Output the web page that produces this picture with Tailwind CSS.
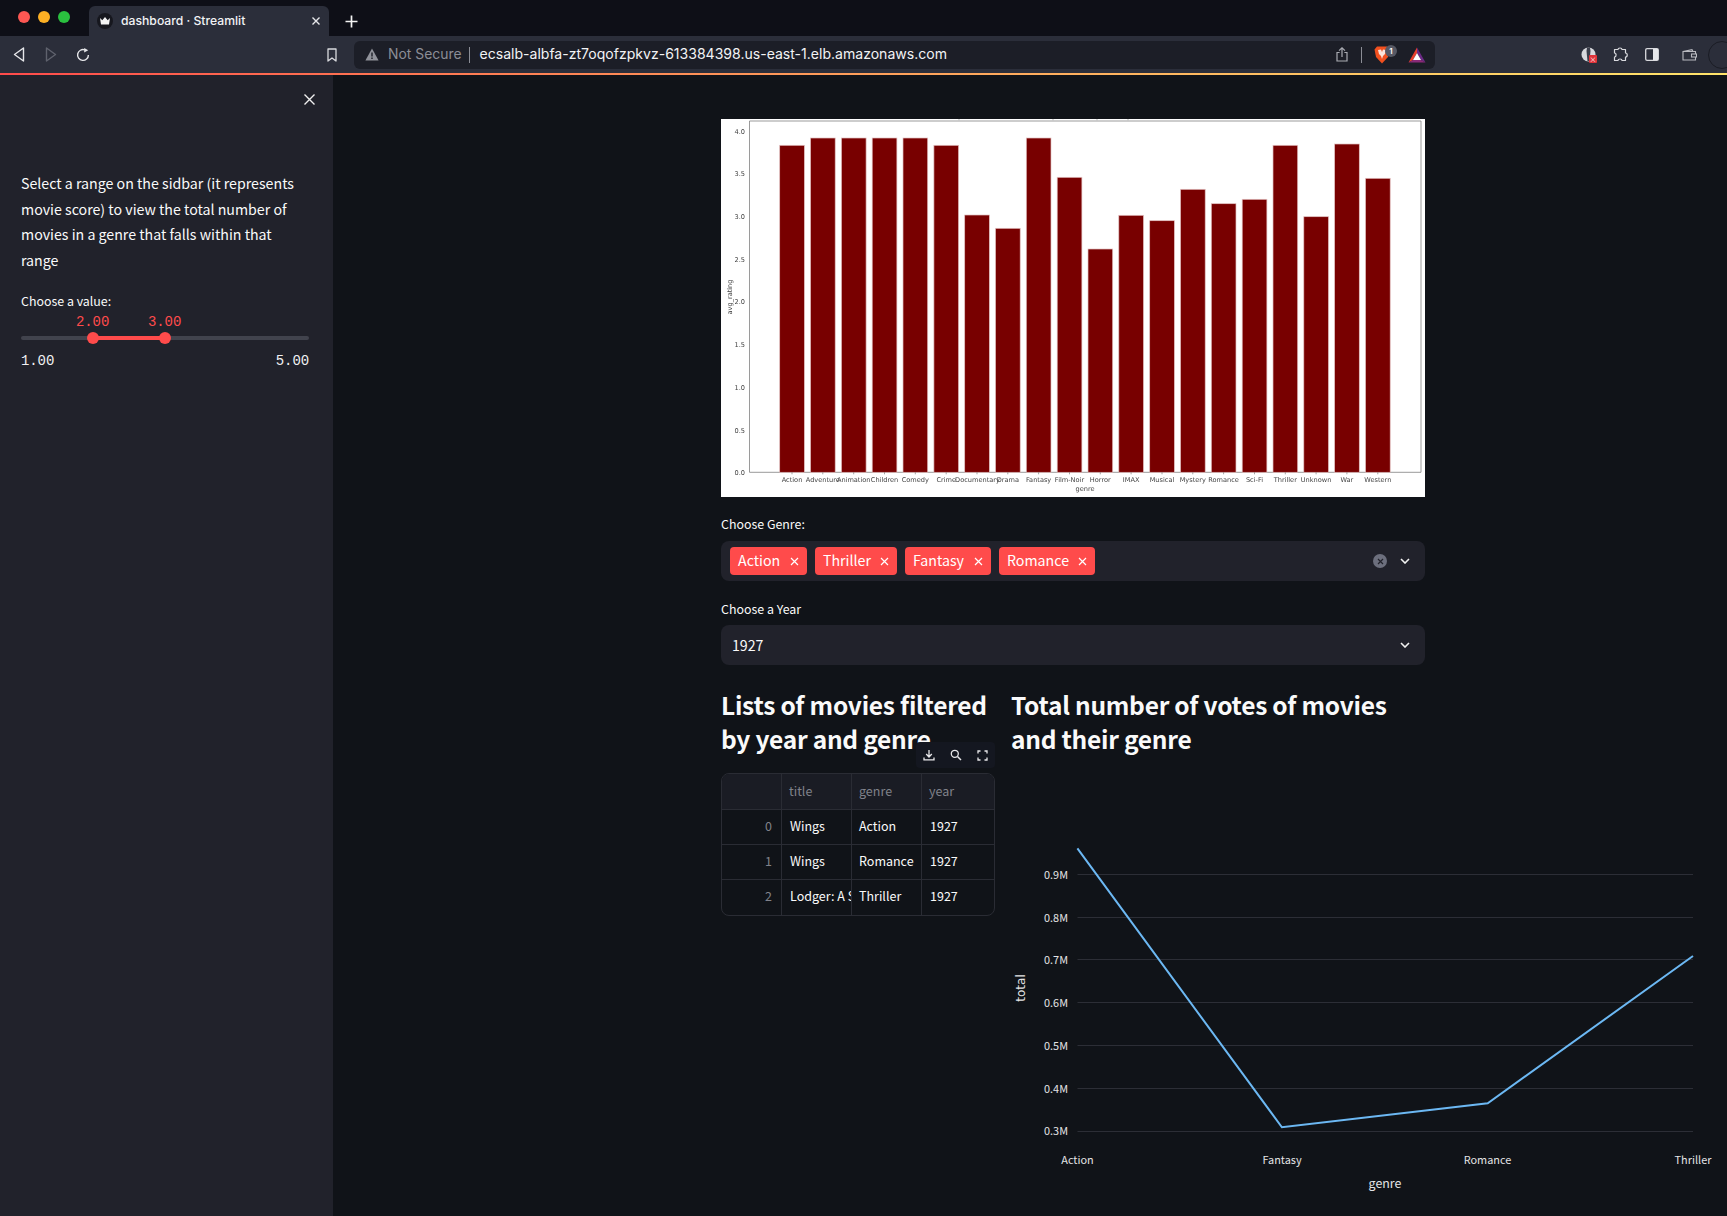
<!DOCTYPE html>
<html lang="en">
<head>
<meta charset="utf-8">
<title>dashboard · Streamlit</title>
<script src="https://cdn.jsdelivr.net/npm/@tailwindcss/browser@4"></script>
</head>
<body class="m-0 bg-[#101318] overflow-hidden">
<div class="w-[1727px] h-[1216px] overflow-hidden flex flex-col bg-[#101318] text-[#fafafa] font-['Noto_Sans_CJK_SC','Noto_Sans',sans-serif]">

  <!-- tab strip -->
  <div class="h-[36px] shrink-0 bg-[#0e0f17] flex items-end font-['Inter',sans-serif]">
    <div class="w-[89px] h-full flex items-center pl-[18px] gap-2 pb-[2px]">
      <span class="w-3 h-3 rounded-full bg-[#fc5753]"></span>
      <span class="w-3 h-3 rounded-full bg-[#fdb024]"></span>
      <span class="w-3 h-3 rounded-full bg-[#2ac03f]"></span>
    </div>
    <div class="w-[240px] h-[30px] bg-[#2b2e3a] rounded-t-[6px] flex items-center pl-[8px] pr-[8px]">
      <span class="w-4 h-4 rounded-full bg-[#16171e] flex items-center justify-center">
        <svg width="12" height="10" viewBox="0 0 12 10"><path d="M1 2 L3.3 4.2 L6 1 L8.7 4.2 L11 2 L10 8.5 H2 Z" fill="#f4f4f4"/></svg>
      </span>
      <span class="ml-[8px] text-[12.2px] font-medium text-[#f2f3f5] whitespace-nowrap">dashboard · Streamlit</span>
      <svg class="ml-auto" width="10" height="10" viewBox="0 0 10 10"><path d="M1.5 1.5 L8.5 8.5 M8.5 1.5 L1.5 8.5" stroke="#e6e7ea" stroke-width="1.4"/></svg>
    </div>
    <div class="w-[44px] h-[30px] flex items-center justify-center">
      <svg width="13" height="13" viewBox="0 0 13 13"><path d="M6.5 0.5 V12.5 M0.5 6.5 H12.5" stroke="#f4f4f4" stroke-width="1.7"/></svg>
    </div>
  </div>

  <!-- toolbar -->
  <div class="h-[37px] shrink-0 bg-[#2b2e3a] flex items-center">
    <div class="w-[354px] h-full relative flex items-center pl-[13px] shrink-0">
      <svg width="12" height="15" viewBox="0 0 12 15" fill="none"><path d="M10.5 1 V14 L1.5 7.5 Z" stroke="#e6e7ea" stroke-width="1.4" stroke-linejoin="round"/></svg>
      <svg class="ml-[20px]" width="12" height="15" viewBox="0 0 12 15" fill="none"><path d="M1.5 1 V14 L10.5 7.5 Z" stroke="#5f626d" stroke-width="1.4" stroke-linejoin="round"/></svg>
      <svg class="ml-[19px]" width="14" height="14" viewBox="0 0 14 14" fill="none"><path d="M12.4 7 A5.4 5.4 0 1 1 8.8 1.9" stroke="#e6e7ea" stroke-width="1.4"/><path d="M8.2 0 L12.2 2.2 L8.2 4.6 Z" fill="#e6e7ea"/></svg>
      <svg class="ml-[237px]" width="10" height="14" viewBox="0 0 10 14" fill="none"><path d="M1 1 H9 V13 L5 10 L1 13 Z" stroke="#d9dade" stroke-width="1.3" stroke-linejoin="round"/></svg>
    </div>
    <div class="w-[1081px] h-[28px] shrink-0 bg-[#1c1e27] rounded-[6px] flex items-center font-['Inter',sans-serif] pl-[11px]">
      <svg width="14" height="13" viewBox="0 0 14 13"><path d="M7 0.5 L13.6 12.5 H0.4 Z" fill="#90929a"/><path d="M7 4.5 V8.5 M7 9.6 V11" stroke="#1c1e27" stroke-width="1.4"/></svg>
      <span class="ml-[9px] text-[13.9px] text-[#8b8d96] whitespace-nowrap leading-none">Not Secure</span>
      <span class="ml-[7px] w-px h-[16px] bg-[#8b8d96]"></span>
      <span class="ml-[10px] text-[14.05px] text-[#f2f3f5] whitespace-nowrap leading-none">ecsalb-albfa-zt7oqofzpkvz-613384398.us-east-1.elb.amazonaws.com</span>
      <svg class="ml-auto" width="12" height="15" viewBox="0 0 12 15" fill="none"><path d="M6 10 V1 M3 3.6 L6 .8 L9 3.6" stroke="#a9abb2" stroke-width="1.2"/><path d="M3.6 5.5 H1 V14 H11 V5.5 H8.4" stroke="#a9abb2" stroke-width="1.2"/></svg>
      <span class="ml-[13px] w-px h-[16px] bg-[#8b8d96]"></span>
      <span class="relative ml-[12px] w-[16px] h-[20px]">
        <svg class="absolute left-0 top-[1px]" width="16" height="18" viewBox="0 0 16 18"><path d="M3 0.5 H13 L15.5 3.5 L14 11 L8 17.5 L2 11 L0.5 3.5 Z" fill="#f1501f"/><path d="M4 4 L7 3.5 L8 6 L9 3.5 L12 4 L11 8 L9 10 L8 13 L7 10 L5 8 Z" fill="#fbe3da"/></svg>
        <span class="absolute left-[11px] top-0 w-[12px] h-[12px] rounded-full bg-[#565864] text-[8px] leading-[12px] text-center text-white font-semibold">1</span>
      </span>
      <svg class="ml-[18px] mr-[9px]" width="18" height="16" viewBox="0 0 18 16"><path d="M9 0.5 L0.5 15.5 L5 13 L9 6 Z" fill="#e8402c"/><path d="M9 0.5 L17.5 15.5 L13 13 L9 6 Z" fill="#6b2a85"/><path d="M0.5 15.5 H17.5 L13 13 H5 Z" fill="#8a2a78"/><path d="M9 6 L13 13 H5 Z" fill="#fff"/></svg>
    </div>
    <div class="flex-1 h-full flex items-center pl-[146px] relative">
      <span class="relative w-[15px] h-[15px]">
        <svg class="absolute inset-0" width="15" height="15" viewBox="0 0 15 15"><circle cx="7.5" cy="7.5" r="7" fill="#d8d9dd"/><path d="M6 .5 H9 L9.5 4 L8.5 14 H6.5 L5.5 4 Z" fill="#3b3e4a"/></svg>
        <span class="absolute left-[8px] top-[8px] w-[8px] h-[8px] bg-[#e0343a] rounded-[1px] text-white text-[7px] leading-[8px] text-center">×</span>
      </span>
      <svg class="ml-[17px]" width="15" height="15" viewBox="0 0 15 15" fill="none"><path d="M5 2.5 C5 .5 9 .5 9 2.5 H12.5 V6 C14.8 6 14.8 10 12.5 10 V13.5 H9 C9 11.5 5 11.5 5 13.5 H1.5 V10 C3.6 10 3.6 6 1.5 6 V2.5 Z" stroke="#d9dade" stroke-width="1.2" stroke-linejoin="round"/></svg>
      <svg class="ml-[17px]" width="14" height="13" viewBox="0 0 14 13"><rect x=".7" y=".7" width="12.6" height="11.6" rx="1.4" fill="none" stroke="#d9dade" stroke-width="1.3"/><rect x="8" y="1" width="5" height="11" fill="#e6e7ea"/></svg>
      <svg class="ml-[23px]" width="15" height="12" viewBox="0 0 15 12" fill="none"><path d="M1 2.5 H13.5 V11 H1 Z M1 2.5 L10 .7 L11 2.5" stroke="#b9bac0" stroke-width="1.1"/><rect x="9.5" y="5" width="5" height="3" fill="#2b2e3a" stroke="#b9bac0" stroke-width="1.1"/></svg>
      <span class="absolute left-[273px] top-[5px] w-[28px] h-[28px] rounded-full border border-[#1a1c24]"></span>
    </div>
  </div>

  <!-- gradient line -->
  <div class="h-[2px] shrink-0 bg-gradient-to-r from-[#ff4b4b] to-[#ffe46a]"></div>

  <!-- app body -->
  <div class="flex-1 flex min-h-0">
    <!-- sidebar -->
    <aside class="w-[333px] shrink-0 bg-[#21222b] pl-[21px] pr-[24px]">
      <div class="h-[21px] pt-[18px] flex justify-end -mr-[7px]">
        <svg width="13" height="13" viewBox="0 0 13 13"><path d="M1.5 1.5 L11.5 11.5 M11.5 1.5 L1.5 11.5" stroke="#f0f0f0" stroke-width="1.4"/></svg>
      </div>
      <p class="mt-[75px] text-[14.2px] leading-[25.6px] text-[#fafafa]">Select a range on the sidbar (it represents movie score) to view the total number of movies in a genre that falls within that range</p>
      <p class="mt-[18px] text-[12.4px] leading-[20px] text-[#fafafa]">Choose a value:</p>
      <div class="relative h-[60px] mt-[2px] font-['Liberation_Mono',monospace] text-[14px]">
        <span class="absolute left-[55px] top-[-1px] leading-[20px] text-[#ff4b4b] tracking-[-0.1px]">2.00</span>
        <span class="absolute left-[127px] top-[-1px] leading-[20px] text-[#ff4b4b] tracking-[-0.1px]">3.00</span>
        <div class="absolute left-0 right-0 top-[23px] h-[4px] rounded-[2px] bg-[#41434d]"></div>
        <div class="absolute left-[72px] w-[72px] top-[23px] h-[4px] bg-[#ff4b4b]"></div>
        <span class="absolute left-[66px] top-[19px] w-[12px] h-[12px] rounded-full bg-[#ff4b4b]"></span>
        <span class="absolute left-[138px] top-[19px] w-[12px] h-[12px] rounded-full bg-[#ff4b4b]"></span>
        <span class="absolute left-0 top-[38px] leading-[20px] text-[#f0f0f2] tracking-[-0.1px]">1.00</span>
        <span class="absolute right-0 top-[38px] leading-[20px] text-[#f0f0f2] tracking-[-0.1px]">5.00</span>
      </div>
    </aside>

    <!-- main -->
    <main class="flex-1 min-w-0 pl-[388px] pt-[44px] overflow-hidden">
      <div class="w-[704px]">
        <!-- matplotlib figure -->
        <svg class="block bg-white blur-[0.3px]" width="704" height="378" viewBox="0 0 704 378" font-family="'DejaVu Sans',sans-serif" font-size="6.6" fill="#444">
          <g stroke="#bbb" stroke-width="1" fill="none"><path d="M238 0 V1.5 M332 0 V1.5 M376 0 V1.5 M407 0 V1.5"/></g>
          <path d="M28.5 2 H700" stroke="#bdbdbd" stroke-width="1.4"/>
          <path d="M28.5 2 V353.3 H700 V2" stroke="#808080" stroke-width="0.8" fill="none"/>
          <g fill="#780000" stroke="#e3c2c2" stroke-width="0.7">
            <rect x="58.7" y="26.3" width="24.7" height="327"/>
            <rect x="89.5" y="19" width="24.7" height="334.3"/>
            <rect x="120.4" y="19" width="24.7" height="334.3"/>
            <rect x="151.2" y="19" width="24.7" height="334.3"/>
            <rect x="182" y="19" width="24.7" height="334.3"/>
            <rect x="212.9" y="26.3" width="24.7" height="327"/>
            <rect x="243.7" y="96" width="24.7" height="257.3"/>
            <rect x="274.5" y="109.3" width="24.7" height="244"/>
            <rect x="305.3" y="19" width="24.7" height="334.3"/>
            <rect x="336.2" y="58.3" width="24.7" height="295"/>
            <rect x="367" y="130" width="24.7" height="223.3"/>
            <rect x="397.8" y="96.3" width="24.7" height="257"/>
            <rect x="428.7" y="101.7" width="24.7" height="251.6"/>
            <rect x="459.5" y="70.3" width="24.7" height="283"/>
            <rect x="490.3" y="84.7" width="24.7" height="268.6"/>
            <rect x="521.2" y="80.3" width="24.7" height="273"/>
            <rect x="552" y="26.3" width="24.7" height="327"/>
            <rect x="582.8" y="97.7" width="24.7" height="255.6"/>
            <rect x="613.6" y="25" width="24.7" height="328.3"/>
            <rect x="644.5" y="59.3" width="24.7" height="294"/>
          </g>
          <g stroke="#666" stroke-width="0.6"><path d="M71 353.3 v2 M101.8 353.3 v2 M132.7 353.3 v2 M163.5 353.3 v2 M194.3 353.3 v2 M225.2 353.3 v2 M256 353.3 v2 M286.8 353.3 v2 M317.6 353.3 v2 M348.5 353.3 v2 M379.3 353.3 v2 M410.1 353.3 v2 M441 353.3 v2 M471.8 353.3 v2 M502.6 353.3 v2 M533.5 353.3 v2 M564.3 353.3 v2 M595.1 353.3 v2 M625.9 353.3 v2 M656.8 353.3 v2"/></g>
          <g text-anchor="end">
            <text x="24" y="14.6">4.0</text>
            <text x="24" y="57.3">3.5</text>
            <text x="24" y="100">3.0</text>
            <text x="24" y="142.7">2.5</text>
            <text x="24" y="185.4">2.0</text>
            <text x="24" y="228.1">1.5</text>
            <text x="24" y="270.8">1.0</text>
            <text x="24" y="313.5">0.5</text>
            <text x="24" y="355.9">0.0</text>
          </g>
          <g text-anchor="middle">
            <text x="71" y="363">Action</text>
            <text x="101.8" y="363">Adventure</text>
            <text x="132.7" y="363">Animation</text>
            <text x="163.5" y="363">Children</text>
            <text x="194.3" y="363">Comedy</text>
            <text x="225.2" y="363">Crime</text>
            <text x="256.5" y="363">Documentary</text>
            <text x="286.8" y="363">Drama</text>
            <text x="317.6" y="363">Fantasy</text>
            <text x="348.5" y="363">Film-Noir</text>
            <text x="379.3" y="363">Horror</text>
            <text x="410.1" y="363">IMAX</text>
            <text x="441" y="363">Musical</text>
            <text x="471.8" y="363">Mystery</text>
            <text x="502.6" y="363">Romance</text>
            <text x="533.5" y="363">Sci-Fi</text>
            <text x="564.3" y="363">Thriller</text>
            <text x="595.1" y="363">Unknown</text>
            <text x="625.9" y="363">War</text>
            <text x="656.8" y="363">Western</text>
            <text x="364" y="372">genre</text>
            <text transform="translate(10.5 178) rotate(-90)">avg_rating</text>
          </g>
        </svg>

        <p class="mt-[17px] mb-[7px] text-[12.4px] leading-[20px]">Choose Genre:</p>
        <div class="h-[40px] rounded-[8px] bg-[#21222b] flex items-center pl-[9px] pr-[15px]">
          <div class="flex gap-[8px]">
            <span class="h-[28px] w-[77px] rounded-[4px] bg-[#ff4b4b] pl-[8px] flex items-center text-[14.2px] text-white">Action<svg class="ml-auto mr-[8px]" width="9" height="9" viewBox="0 0 9 9"><path d="M1 1 L8 8 M8 1 L1 8" stroke="#fff" stroke-width="1.2"/></svg></span>
            <span class="h-[28px] w-[82px] rounded-[4px] bg-[#ff4b4b] pl-[8px] flex items-center text-[14.2px] text-white">Thriller<svg class="ml-auto mr-[8px]" width="9" height="9" viewBox="0 0 9 9"><path d="M1 1 L8 8 M8 1 L1 8" stroke="#fff" stroke-width="1.2"/></svg></span>
            <span class="h-[28px] w-[86px] rounded-[4px] bg-[#ff4b4b] pl-[8px] flex items-center text-[14.2px] text-white">Fantasy<svg class="ml-auto mr-[8px]" width="9" height="9" viewBox="0 0 9 9"><path d="M1 1 L8 8 M8 1 L1 8" stroke="#fff" stroke-width="1.2"/></svg></span>
            <span class="h-[28px] w-[96px] rounded-[4px] bg-[#ff4b4b] pl-[8px] flex items-center text-[14.2px] text-white">Romance<svg class="ml-auto mr-[8px]" width="9" height="9" viewBox="0 0 9 9"><path d="M1 1 L8 8 M8 1 L1 8" stroke="#fff" stroke-width="1.2"/></svg></span>
          </div>
          <span class="ml-auto w-[14px] h-[14px] rounded-full bg-[#6c6f7d] flex items-center justify-center">
            <svg width="7" height="7" viewBox="0 0 7 7"><path d="M1 1 L6 6 M6 1 L1 6" stroke="#21222b" stroke-width="1.2"/></svg>
          </span>
          <svg class="ml-[13px]" width="10" height="6" viewBox="0 0 10 6" fill="none"><path d="M1 1 L5 5 L9 1" stroke="#f2f2f2" stroke-width="1.6"/></svg>
        </div>

        <p class="mt-[18px] mb-[6px] text-[12.4px] leading-[20px]">Choose a Year</p>
        <div class="h-[40px] rounded-[8px] bg-[#21222b] flex items-center pl-[11px] pr-[15px]">
          <span class="text-[14.2px] pt-[2px]">1927</span>
          <svg class="ml-auto" width="10" height="6" viewBox="0 0 10 6" fill="none"><path d="M1 1 L5 5 L9 1" stroke="#f2f2f2" stroke-width="1.6"/></svg>
        </div>

        <div class="mt-[23px] flex gap-[16px]">
          <!-- left column -->
          <div class="w-[274px] shrink-0">
            <h2 class="text-[24.5px] leading-[34px] font-bold tracking-[-0.25px] whitespace-nowrap">Lists of movies filtered<br>by year and genre</h2>
            <div class="relative mt-[17px]">
              <div class="absolute right-0 top-[-31px] h-[26px] w-[79px] rounded-[4px] bg-[#141720] flex items-center justify-between px-[7px]">
                <svg width="12" height="12" viewBox="0 0 12 12" fill="none"><path d="M6 1 V7.5 M3.2 5 L6 8 L8.8 5 M1 8.5 V10.8 H11 V8.5" stroke="#e8e8ea" stroke-width="1.3"/></svg>
                <svg width="12" height="12" viewBox="0 0 12 12" fill="none"><circle cx="4.8" cy="4.8" r="3.5" stroke="#e8e8ea" stroke-width="1.3"/><path d="M7.5 7.5 L11 11" stroke="#e8e8ea" stroke-width="1.5"/></svg>
                <svg width="11" height="11" viewBox="0 0 11 11" fill="none"><path d="M1 3.5 V1 H3.5 M7.5 1 H10 V3.5 M10 7.5 V10 H7.5 M3.5 10 H1 V7.5" stroke="#e8e8ea" stroke-width="1.3"/></svg>
              </div>
              <div class="rounded-[8px] border border-[#2a2c34] overflow-hidden text-[12.5px]">
                <div class="grid grid-cols-[60px_70px_70px_1fr] h-[36px] bg-[#1a1c24] text-[#80828a] border-b border-[#2a2c34] leading-[34px]">
                  <span class="border-r border-[#2a2c34]"></span>
                  <span class="border-r border-[#2a2c34] pl-[7px]">title</span>
                  <span class="border-r border-[#2a2c34] pl-[7px]">genre</span>
                  <span class="pl-[7px]">year</span>
                </div>
                <div class="grid grid-cols-[60px_70px_70px_1fr] h-[35px] border-b border-[#2a2c34] leading-[32px]">
                  <span class="border-r border-[#2a2c34] text-right pr-[9px] text-[#80828a]">0</span>
                  <span class="border-r border-[#2a2c34] pl-[8px]">Wings</span>
                  <span class="border-r border-[#2a2c34] pl-[7px]">Action</span>
                  <span class="pl-[8px]">1927</span>
                </div>
                <div class="grid grid-cols-[60px_70px_70px_1fr] h-[35px] border-b border-[#2a2c34] leading-[32px]">
                  <span class="border-r border-[#2a2c34] text-right pr-[9px] text-[#80828a]">1</span>
                  <span class="border-r border-[#2a2c34] pl-[8px]">Wings</span>
                  <span class="border-r border-[#2a2c34] pl-[7px]">Romance</span>
                  <span class="pl-[8px]">1927</span>
                </div>
                <div class="grid grid-cols-[60px_70px_70px_1fr] h-[35px] leading-[32px]">
                  <span class="border-r border-[#2a2c34] text-right pr-[9px] text-[#80828a]">2</span>
                  <span class="border-r border-[#2a2c34] pl-[8px] overflow-hidden whitespace-nowrap">Lodger: A S</span>
                  <span class="border-r border-[#2a2c34] pl-[7px]">Thriller</span>
                  <span class="pl-[8px]">1927</span>
                </div>
              </div>
            </div>
          </div>
          <!-- right column -->
          <div class="w-[414px] shrink-0">
            <h2 class="text-[24.5px] leading-[34px] font-bold tracking-[-0.25px] whitespace-nowrap">Total number of votes of movies<br>and their genre</h2>
            <svg class="block mt-[24px] overflow-visible" width="705" height="436" viewBox="0 0 705 436" fill="#e4e4e6" font-size="10.9" font-family="'Noto Sans CJK SC',sans-serif">
              <g stroke="#2c2e36" stroke-width="1">
                <path d="M66.5 94.5 H682"/><path d="M66.5 137.5 H682"/><path d="M66.5 179.5 H682"/><path d="M66.5 222.5 H682"/><path d="M66.5 265.5 H682"/><path d="M66.5 308.5 H682"/><path d="M66.5 351.5 H682"/>
              </g>
              <path d="M66.4 68.3 L270.9 347.3 L476.7 323.3 L682 176" fill="none" stroke="#6cb8f3" stroke-width="2"/>
              <g text-anchor="end">
                <text x="57" y="98.5">0.9M</text>
                <text x="57" y="141.5">0.8M</text>
                <text x="57" y="183.5">0.7M</text>
                <text x="57" y="226.5">0.6M</text>
                <text x="57" y="269.5">0.5M</text>
                <text x="57" y="312.5">0.4M</text>
                <text x="57" y="355">0.3M</text>
              </g>
              <g text-anchor="middle">
                <text x="66.5" y="384">Action</text>
                <text x="271" y="384">Fantasy</text>
                <text x="476.5" y="384">Romance</text>
                <text x="682" y="384">Thriller</text>
                <text x="374" y="408" font-size="12.4">genre</text>
                <text transform="translate(14 208) rotate(-90)" font-size="12" font-family="'DejaVu Sans',sans-serif">total</text>
              </g>
            </svg>
          </div>
        </div>
      </div>
    </main>
  </div>
</div>
</body>
</html>
